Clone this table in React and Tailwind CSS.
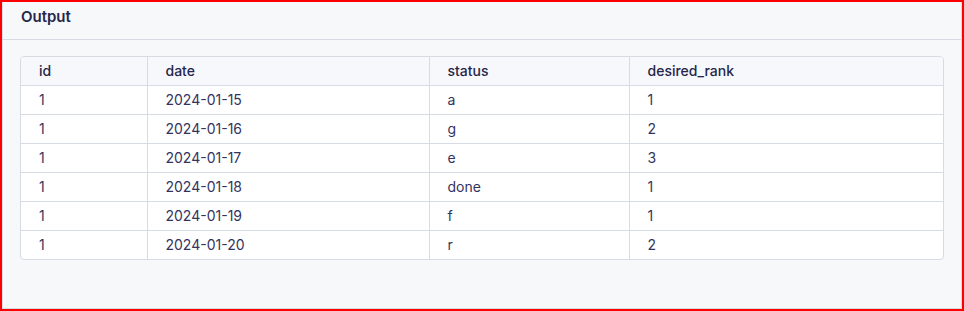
const COLUMNS = ['id', 'date', 'status', 'desired_rank'];

const ROWS = [
  ['1', '2024-01-15', 'a', '1'],
  ['1', '2024-01-16', 'g', '2'],
  ['1', '2024-01-17', 'e', '3'],
  ['1', '2024-01-18', 'done', '1'],
  ['1', '2024-01-19', 'f', '1'],
  ['1', '2024-01-20', 'r', '2'],
];

const WIDTHS = ['w-[126px]', 'w-[282px]', 'w-[200px]', ''];

export default function App() {
  return (
    <div className="w-[964px] h-[311px] border-2 border-[#f00] bg-[#f7f8fa]" style={{ fontFamily: 'Inter, "Noto Sans", sans-serif' }}>
      <div className="h-full border border-[#d6dbe4] border-t-0 flex flex-col">
        {/* Header */}
        <div className="h-[38px] border-b border-[#d6dbe4] px-[18px] flex items-center">
          <h2 className="text-[15px] font-semibold text-[#26264a] -mt-[6px]">Output</h2>
        </div>

        {/* Table */}
        <div className="px-[17px] pt-[16px]">
          <div className="rounded-[4px] border border-[#d6dbe4] overflow-hidden bg-white">
            <table className="w-full border-collapse text-[14px] text-[#33335e]">
              <thead>
                <tr className="bg-[#f7f8fc] h-[28px]">
                  {COLUMNS.map((c, i) => (
                    <th key={c} className={`${WIDTHS[i]} text-left font-medium text-[#26264a] pl-[18px] ${i > 0 ? 'border-l border-[#d6dbe4]' : ''}`}>
                      {c}
                    </th>
                  ))}
                </tr>
              </thead>
              <tbody>
                {ROWS.map((r, ri) => (
                  <tr key={ri} className="h-[29px] border-t border-[#d6dbe4]">
                    {r.map((v, i) => (
                      <td key={i} className={`pl-[18px] ${i > 0 ? 'border-l border-[#d6dbe4]' : ''}`}>{v}</td>
                    ))}
                  </tr>
                ))}
              </tbody>
            </table>
          </div>
        </div>
      </div>
    </div>
  );
}
